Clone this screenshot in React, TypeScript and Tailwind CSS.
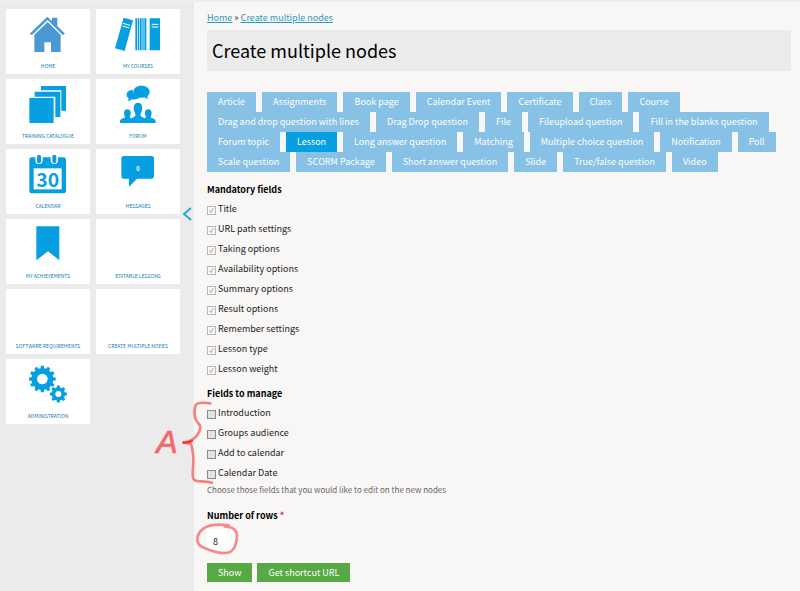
import { useState, type ReactNode } from "react";

const blue = "#069fe2";

const gearPath = (cx: number, cy: number, outer: number, inner: number, teeth: number) => {
  const points: string[] = [];
  const step = (Math.PI * 2) / teeth;
  for (let i = 0; i < teeth; i++) {
    const a = i * step - Math.PI / 2;
    const corners: [number, number][] = [
      [-0.32, inner],
      [-0.2, outer],
      [0.2, outer],
      [0.32, inner],
    ];
    for (const [offset, r] of corners) {
      points.push(`${(cx + r * Math.cos(a + offset * step)).toFixed(1)} ${(cy + r * Math.sin(a + offset * step)).toFixed(1)}`);
    }
  }
  return `M${points.join("L")}Z`;
};

function Icon({ box, children }: { box: string; children?: ReactNode }) {
  return (
    <svg viewBox={box} className="h-[52px] w-[84px]" fill={blue} aria-hidden="true">
      {children}
    </svg>
  );
}

const tiles: { label: string; icon: ReactNode }[] = [
  {
    label: "Home",
    icon: (
      <Icon box="20 27 252 156">
        <g fill="#4b98d3">
          <path d="M91 101 144 50l14 13V53h16v25l23 23-7 4-45-45-47 45z" />
          <path d="m145 66 39 38v52h-29v-29h-20v29h-30v-52z" />
        </g>
      </Icon>
    ),
  },
  {
    label: "My courses",
    icon: (
      <Icon box="288 27 252 156">
        <path d="m371 53 28 8-25 92-29-8zM449 55h31v96h-31zM406 55h6v96h-6zM414 55h4v96h-4zM420 55h5v96h-5zM427 55h4v96h-4zM433 55h6v96h-6z" />
        <path d="m369 70 21 6m-23 2 21 6M455 73h20m-20 8h20" stroke="#fff" strokeWidth="3" />
      </Icon>
    ),
  },
  {
    label: "Training catalogue",
    icon: (
      <Icon box="20 237 252 156">
        <path d="M125 258h75v74h-14v-61h-61zM106 275h77v76h-15v-61h-62zM90 294h73v75H90z" />
      </Icon>
    ),
  },
  {
    label: "Forum",
    icon: (
      <Icon box="288 237 252 156">
        <path d="M398 269c-12 1-19 8-18 16 0 5 3 8 6 10 0 4-2 6-4 8 6 0 10-2 13-5 11 2 22-1 25-7-13-2-22-11-22-22z" />
        <path d="M424 257c15 0 25 8 25 18 0 6-3 10-7 13 0 4 2 6 4 8-6 0-10-2-13-4-17 4-32-4-33-16 0-11 10-19 24-19z" />
        <path d="M360 369c0-10 2-12 10-14 5-1 5-4 4-7-3-4-4-20 8-20s12 15 8 20c-1 3 0 6 5 7 3-4 9-4 11-8 1-3 0-7-2-10-4-9-5-29 10-29s14 20 10 29c-2 3-3 7-2 10 2 4 8 4 11 8 4-1 6-4 4-7-4-5-4-20 8-20s11 16 8 20c-1 3-1 6 4 7 8 2 10 4 10 14z" />
      </Icon>
    ),
  },
  {
    label: "Calendar",
    icon: (
      <Icon box="20 12 252 156">
        <rect x="90" y="37" width="110" height="108" rx="8" />
        <path d="M103 70h84v63h-84z" fill="#fff" />
        <path d="M108 34h22v12a11 11 0 0 1-22 0zM154 34h22v12a11 11 0 0 1-22 0z" fill="#fff" />
        <rect x="113" y="29" width="12" height="26" rx="6" />
        <rect x="159" y="29" width="12" height="26" rx="6" />
        <text x="145" y="125" textAnchor="middle" fontSize="58" fontWeight="700" fontFamily="Noto Sans CJK SC, sans-serif">
          30
        </text>
      </Icon>
    ),
  },
  {
    label: "Messages",
    icon: (
      <Icon box="288 12 252 156">
        <path d="M372 33h82c6 0 8 3 8 8v52c0 6-3 8-8 8h-43l-24 24v-24h-15c-6 0-8-3-8-8V41c0-6 3-8 8-8z" />
        <text x="414" y="78" textAnchor="middle" fontSize="17" fontWeight="700" fill="#fff" fontFamily="Noto Sans CJK SC, sans-serif">
          0
        </text>
      </Icon>
    ),
  },
  {
    label: "My achievements",
    icon: (
      <Icon box="20 220 252 156">
        <path d="M111 242h69v102l-34-27-35 27z" />
      </Icon>
    ),
  },
  { label: "Editable lessons", icon: <Icon box="0 0 252 156" /> },
  { label: "Software requirements", icon: <Icon box="0 0 252 156" /> },
  { label: "Create multiple nodes", icon: <Icon box="0 0 252 156" /> },
  {
    label: "Administration",
    icon: (
      <Icon box="20 219 252 156">
        <path d={gearPath(129, 279, 40, 33, 12)} />
        <circle cx="129" cy="279" r="16" fill="#fff" />
        <path d={gearPath(177, 324, 26, 20, 8)} />
        <circle cx="177" cy="324" r="9" fill="#fff" />
      </Icon>
    ),
  },
];

const contentTypes = [
  "Article", "Assignments", "Book page", "Calendar Event", "Certificate", "Class", "Course",
  "Drag and drop question with lines", "Drag Drop question", "File", "Fileupload question",
  "Fill in the blanks question", "Forum topic", "Lesson", "Long answer question", "Matching",
  "Multiple choice question", "Notification", "Poll", "Scale question", "SCORM Package",
  "Short answer question", "Slide", "True/false question", "Video",
];

const mandatory = [
  "Title", "URL path settings", "Taking options", "Availability options", "Summary options",
  "Result options", "Remember settings", "Lesson type", "Lesson weight",
];

const optional = ["Introduction", "Groups audience", "Add to calendar", "Calendar Date"];

function CheckRow({ label, locked }: { label: string; locked?: boolean }) {
  return (
    <label className="flex h-5 items-center gap-[2px] text-[#222]">
      <span className="grid pt-[2px]">
        <input
          type="checkbox"
          defaultChecked={locked}
          disabled={locked}
          className="peer col-start-1 row-start-1 size-[9px] appearance-none border border-[#b9b9b9] bg-[#f6f6f6] enabled:border-[#8a8a8a] enabled:bg-[#e2e2e2]"
        />
        <svg viewBox="0 0 9 9" className="invisible col-start-1 row-start-1 size-[9px] peer-checked:visible" fill="none" stroke="#aaa" aria-hidden="true">
          <path d="m2.500 4.500 1.500 2 2.500-4.500" />
        </svg>
      </span>
      {label}
    </label>
  );
}

export default function App() {
  const [active, setActive] = useState("Lesson");
  const [rows, setRows] = useState("8");

  return (
    <div className="flex min-h-screen border-t-2 border-[#eeeeec] bg-[#f8f7f5] font-['Noto_Sans_CJK_SC',sans-serif] text-[9px] leading-[14px] text-[#222]">
      <aside className="relative w-[194px] shrink-0 bg-[#ebebeb] pt-[7px] pl-[6px]">
        <nav className="grid grid-cols-[84px_84px] gap-x-[6px] gap-y-[5px]">
          {tiles.map((tile) => (
            <a key={tile.label} href="#" className="flex h-[65px] flex-col items-center bg-white text-[5px] leading-[10px] text-[#0b7db0] uppercase">
              {tile.icon}
              <span className="whitespace-nowrap">{tile.label}</span>
            </a>
          ))}
        </nav>
        <button type="button" aria-label="Collapse menu" className="absolute top-[205px] right-[2px]">
          <svg viewBox="0 0 10 14" className="h-[14px] w-[10px]" fill="none" stroke="#2ba5dc" strokeWidth="2" aria-hidden="true">
            <path d="M9 1 2 7l7 6" />
          </svg>
        </button>
      </aside>

      <main className="min-w-0 flex-1 pt-[9px] pr-[9px] pl-[13px]">
        <nav aria-label="Breadcrumb" className="text-[#2c9bbd]">
          <a href="#" className="underline">Home</a>
          <span className="text-[#333]"> » </span>
          <a href="#" className="underline">Create multiple nodes</a>
        </nav>
        <h1 className="mt-[5px] bg-[#ebebeb] px-[5px] text-[18px] leading-[41px] text-black">Create multiple nodes</h1>

        <div className="mt-[21px] flex flex-wrap gap-x-[6px]">
          {contentTypes.map((type) => (
            <button
              key={type}
              type="button"
              aria-pressed={type === active}
              onClick={() => setActive(type)}
              className={`h-5 px-[11px] text-white ${type === active ? "bg-[#069fe2]" : "bg-[#88c1e6]"}`}
            >
              {type}
            </button>
          ))}
        </div>

        <form onSubmit={(e) => e.preventDefault()}>
          <fieldset className="pt-[11px]">
            <legend className="contents">
              <span className="mb-[2px] block font-bold text-black">Mandatory fields</span>
            </legend>
            {mandatory.map((name) => (
              <CheckRow key={name} label={name} locked />
            ))}
          </fieldset>

          <fieldset className="relative pt-2">
            <legend className="contents">
              <span className="mb-[2px] block font-bold text-black">Fields to manage</span>
            </legend>
            {optional.map((name) => (
              <CheckRow key={name} label={name} />
            ))}
            <p className="text-[8px] text-[#666]">Choose those fields that you would like to edit on the new nodes</p>
            <svg viewBox="10 60 183 255" className="pointer-events-none absolute top-[21px] -left-[54px] h-[85px] w-[61px]" fill="none" stroke="#f58080" strokeWidth="8" strokeLinecap="round" strokeLinejoin="round" aria-hidden="true">
              <path d="M182 70c-20-3-42-3-45 8-4 15-2 35 2 42 4 8 14 14 13 22-2 20-20 42-50 46 12 0 22 1 24 10 3 12 6 30 5 50-1 20-4 40 0 48 5 12 30 5 56 12" />
              <path d="M102 188c10 0 18-1 24-5" stroke="#ee3a3f" />
              <text x="20" y="218" fontSize="96" fontStyle="italic" fill="#f2686a" stroke="#f2686a" strokeWidth="2" fontFamily="Liberation Sans, sans-serif">
                A
              </text>
            </svg>
          </fieldset>

          <div className="relative mt-3">
            <label htmlFor="rows" className="block font-bold text-black">
              Number of rows <span className="text-[#d8232a]">*</span>
            </label>
            <input
              id="rows"
              type="text"
              value={rows}
              onChange={(e) => setRows(e.target.value)}
              className="mt-[6px] block h-[24px] w-[28px] bg-white pl-[6px] outline-none"
            />
            <svg viewBox="135 430 135 96" className="pointer-events-none absolute top-[14px] -left-[12px] h-[32px] w-[45px]" fill="none" stroke="#f58a8c" strokeWidth="8" strokeLinecap="round" aria-hidden="true">
              <path d="M236 437c-30-4-58-3-76 10-18 13-22 34-14 46 4 7 8 9 18 12 14 6 32 14 54 15 20 1 30-4 36-18 6-16 10-34 4-46-5-10-16-15-34-16" />
            </svg>
          </div>

          <div className="mt-[10px] flex gap-[5px] text-white">
            <button type="submit" className="h-[19px] bg-[#56a944] px-[11px]">Show</button>
            <button type="button" className="h-[19px] bg-[#56a944] px-[11px]">Get shortcut URL</button>
          </div>
        </form>
      </main>
    </div>
  );
}
